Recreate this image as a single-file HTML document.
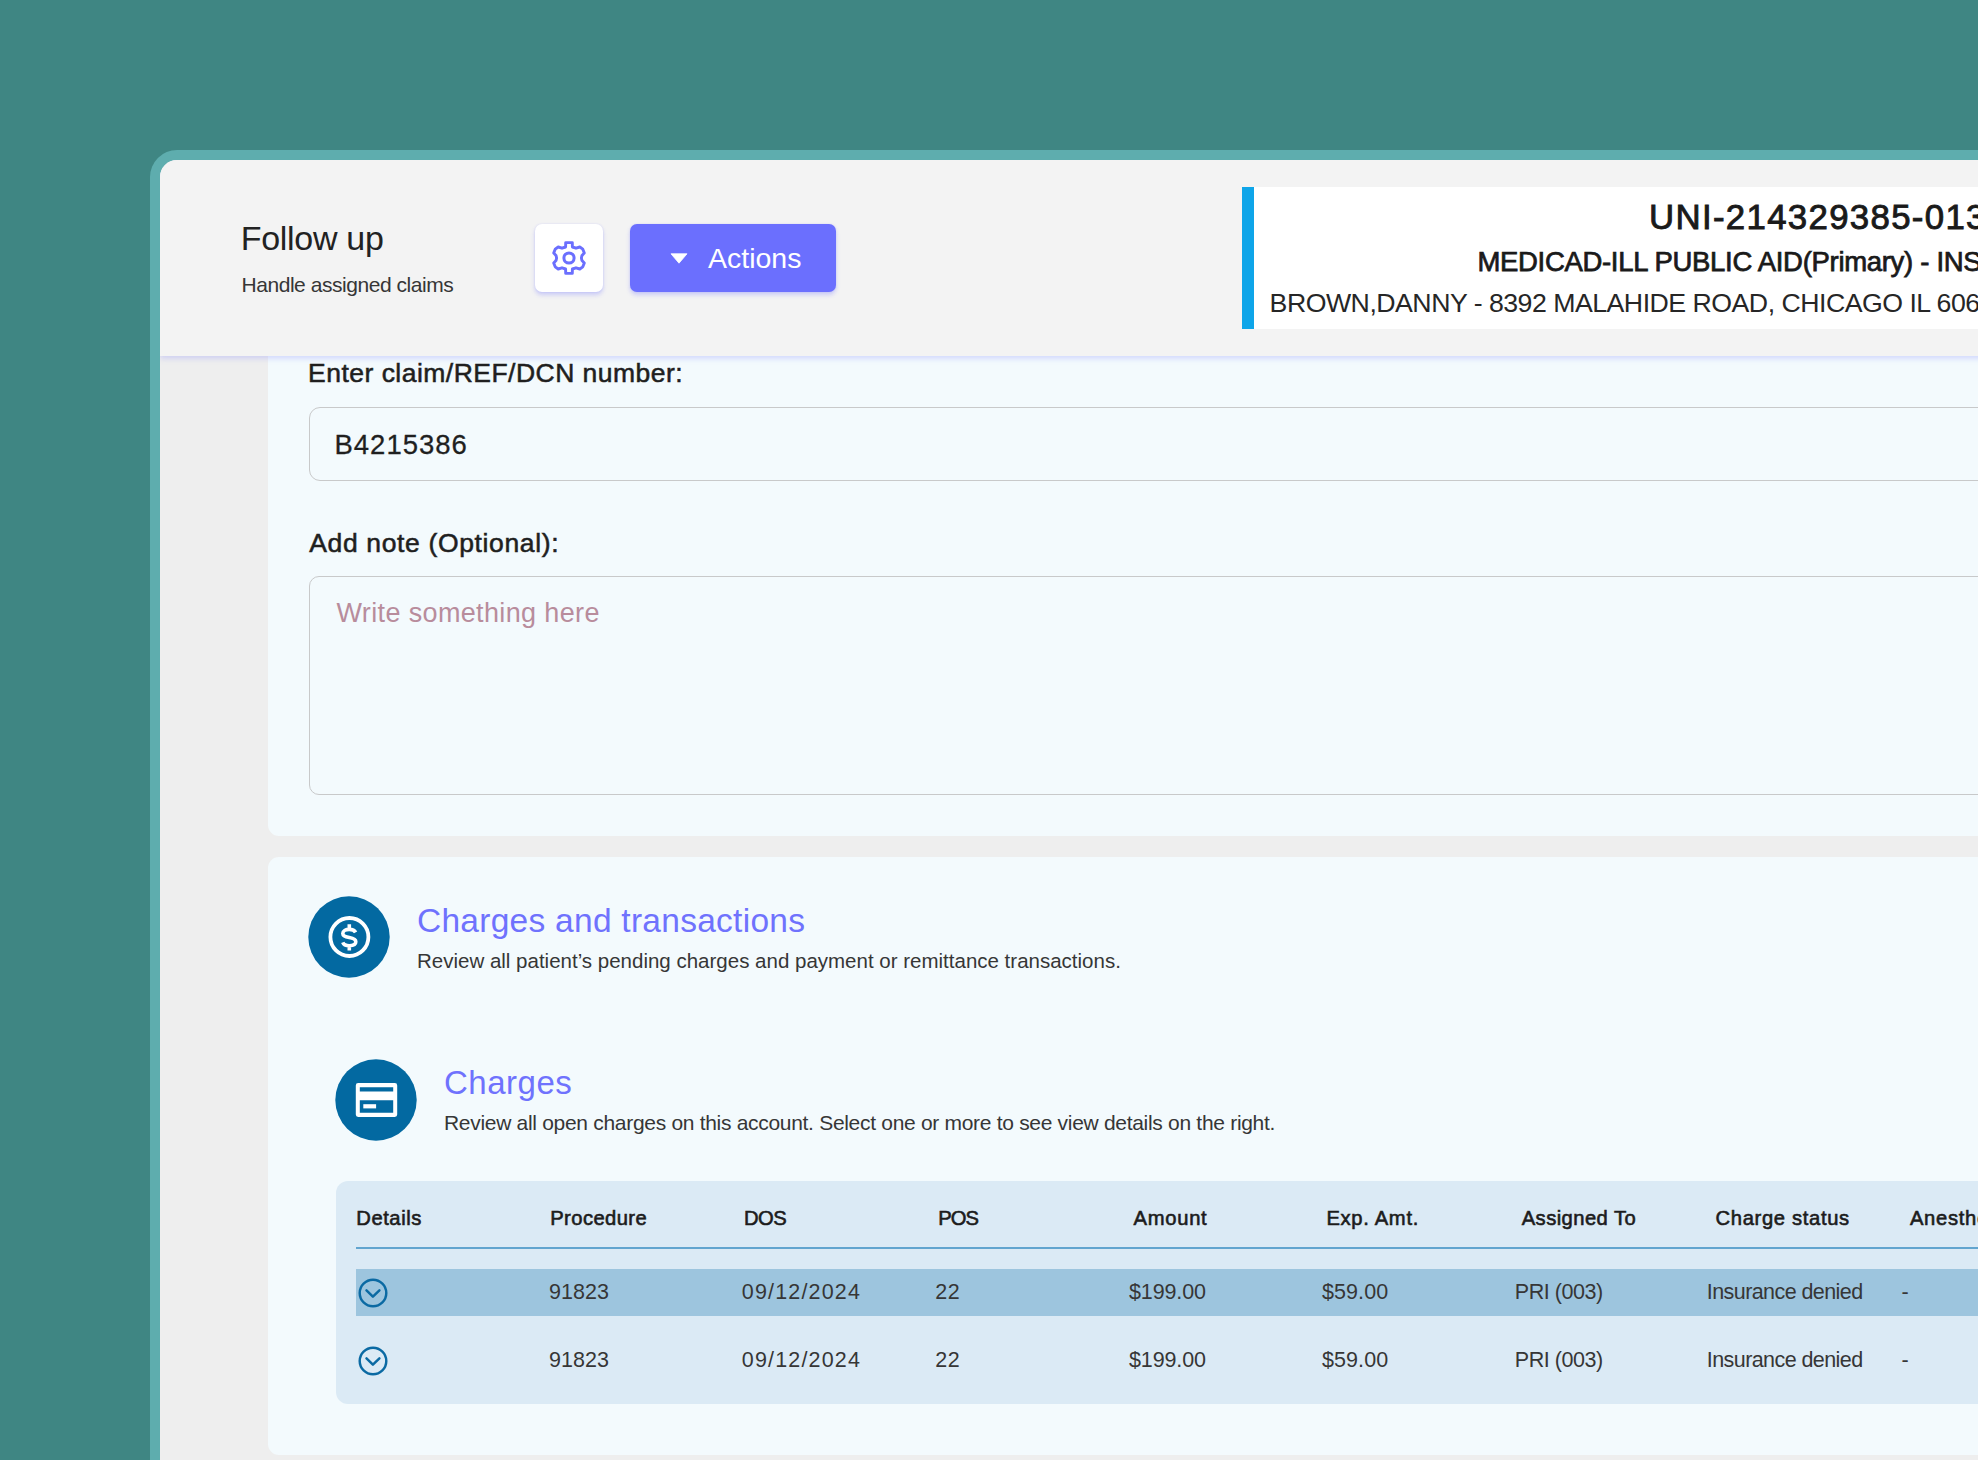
<!DOCTYPE html>
<html><head><meta charset="utf-8"><style>
*{margin:0;padding:0;box-sizing:border-box}
html,body{width:1978px;height:1460px;overflow:hidden;background:#3f8683;font-family:'Liberation Sans', sans-serif}
.t{position:absolute;white-space:nowrap;font-family:'Liberation Sans', sans-serif}
.abs{position:absolute}
</style></head><body>
<div class="abs" style="left:150px;top:150px;width:1900px;height:1400px;background:#5eadae;border-top-left-radius:27px"></div>
<div class="abs" style="left:160px;top:160px;width:1900px;height:1400px;background:#eeeeee;border-top-left-radius:17px;overflow:hidden">
<div class="abs" style="left:108px;top:0px;width:1900px;height:676px;background:#f3fafd;border-radius:11px"></div>
<div class="abs" style="left:148.6px;top:247.3px;width:1900px;height:73.7px;border:1.6px solid #c8c9ca;border-radius:11px;background:#f3fafd"></div>
<div class="abs" style="left:148.6px;top:416px;width:1900px;height:218.6px;border:1.6px solid #c8c9ca;border-radius:10px;background:#f3fafd"></div>
<div class="abs" style="left:108px;top:697px;width:1900px;height:598px;background:#f3fafd;border-radius:11px"></div>
<div class="abs" style="left:176px;top:1021px;width:1900px;height:223px;background:#dbeaf5;border-radius:12px"></div>
<div class="abs" style="left:196px;top:1087px;width:1900px;height:2px;background:#62a5cf"></div>
<div class="abs" style="left:196px;top:1109px;width:1900px;height:47px;background:#9dc5de"></div>
<div class="abs" style="left:0;top:0;width:1900px;height:196px;background:#f3f3f3;box-shadow:0 2px 6px rgba(108,111,254,0.28)"></div>
</div>
<div class="abs" style="left:535px;top:224px;width:68px;height:68px;background:#fff;border-radius:7px;box-shadow:0 3px 4px rgba(108,111,254,0.30), 0 0 2px rgba(108,111,254,0.18)"></div>
<svg class="abs" style="left:549px;top:238px" width="40" height="40" viewBox="-20 -20 40 40"><path d="M-3.30,-15.40 L-3.40,-11.00 L-7.00,-9.80 L-10.80,-11.00 L-13.80,-8.80 L-15.30,-5.00 L-13.00,-2.60 L-12.40,0.00 L-13.00,2.60 L-15.30,5.00 L-13.80,8.80 L-10.80,11.00 L-7.00,9.80 L-3.40,11.00 L-3.30,15.40 L3.30,15.40 L3.40,11.00 L7.00,9.80 L10.80,11.00 L13.80,8.80 L15.30,5.00 L13.00,2.60 L12.40,0.00 L13.00,-2.60 L15.30,-5.00 L13.80,-8.80 L10.80,-11.00 L7.00,-9.80 L3.40,-11.00 L3.30,-15.40 Z" fill="none" stroke="#6b6ffe" stroke-width="2.9" stroke-linejoin="round"/><circle cx="0" cy="0" r="5.1" fill="none" stroke="#6b6ffe" stroke-width="3.0"/></svg>
<div class="abs" style="left:630px;top:224px;width:206px;height:68px;background:#6b6ffe;border-radius:7px;box-shadow:0 3px 4px rgba(108,111,254,0.30), 0 0 2px rgba(108,111,254,0.18)"></div>
<svg class="abs" style="left:660px;top:240px" width="40" height="36" viewBox="660 240 40 36"><path d="M671,253.8 L687,253.8 L679,263.2 Z" fill="#fff" stroke="#fff" stroke-width="0.8" stroke-linejoin="round"/></svg>
<div class="abs" style="left:1242px;top:187px;width:800px;height:142px;background:#ffffff;border-left:12px solid #0ea5e9"></div>
<svg class="abs" style="left:308px;top:896px" width="82" height="82" viewBox="0 0 82 82"><circle cx="41" cy="41" r="40.7" fill="#0369a1"/><circle cx="41.4" cy="41" r="19.0" fill="none" stroke="#fff" stroke-width="3.8"/><path d="M47.6,36.4 C46.6,34.4 44.2,33.4 41.3,33.4 C37.6,33.4 34.8,35 34.8,37.6 C34.8,40.4 37.8,41 41.3,41.6 C44.8,42.2 47.8,43 47.8,45.8 C47.8,48.3 45,49.7 41.3,49.7 C38.2,49.7 35.6,48.7 34.8,46.4 M41.3,28.2 L41.3,33.4 M41.3,49.7 L41.3,54.4" fill="none" stroke="#fff" stroke-width="3.6" stroke-linecap="butt" stroke-linejoin="round"/></svg>
<svg class="abs" style="left:335px;top:1059px" width="82" height="82" viewBox="0 0 82 82"><circle cx="41" cy="41" r="40.7" fill="#0369a1"/><path fill="#fff" fill-rule="evenodd" d="M23.2,24 L59.8,24 Q62.2,24 62.2,26.4 L62.2,55.6 Q62.2,58 59.8,58 L23.2,58 Q20.8,58 20.8,55.6 L20.8,26.4 Q20.8,24 23.2,24 Z M24.8,28.2 L24.8,32.6 L58.2,32.6 L58.2,28.2 Z M24.8,41.2 L24.8,53.8 L58.2,53.8 L58.2,41.2 Z"/><rect x="28.3" y="45.2" width="12.8" height="4.2" fill="#fff"/></svg>
<svg class="abs" style="left:357.1px;top:1276.9px" width="32" height="32" viewBox="-16 -16 32 32"><circle cx="0" cy="0" r="13.3" fill="none" stroke="#0b6aa3" stroke-width="2.45"/><path d="M-6.5,-2.7 L-0.1,3.6 L6.4,-2.7" fill="none" stroke="#0b6aa3" stroke-width="2.5" stroke-linecap="round" stroke-linejoin="round"/></svg>
<svg class="abs" style="left:357.1px;top:1344.8px" width="32" height="32" viewBox="-16 -16 32 32"><circle cx="0" cy="0" r="13.3" fill="none" stroke="#0b6aa3" stroke-width="2.45"/><path d="M-6.5,-2.7 L-0.1,3.6 L6.4,-2.7" fill="none" stroke="#0b6aa3" stroke-width="2.5" stroke-linecap="round" stroke-linejoin="round"/></svg>
<div class="t" style="left:240.70px;top:220.62px;font-size:34px;line-height:34px;font-weight:400;letter-spacing:-0.300px;color:#222222;">Follow up</div>
<div class="t" style="left:241.50px;top:274.12px;font-size:21px;line-height:21px;font-weight:400;letter-spacing:-0.452px;color:#363636;">Handle assigned claims</div>
<div class="t" style="left:708.10px;top:243.92px;font-size:28.5px;line-height:28.5px;font-weight:400;letter-spacing:-0.017px;color:#ffffff;">Actions</div>
<div class="t" style="left:1649.10px;top:199.84px;font-size:34.8px;line-height:34.8px;font-weight:400;letter-spacing:1.313px;color:#1a1a1a;-webkit-text-stroke:0.9px #1a1a1a;">UNI-214329385-013</div>
<div class="t" style="left:1477.40px;top:248.22px;font-size:27.5px;line-height:27.5px;font-weight:400;letter-spacing:-0.311px;color:#1a1a1a;-webkit-text-stroke:0.75px #1a1a1a;">MEDICAD-ILL PUBLIC AID(Primary) - INSURANCE</div>
<div class="t" style="left:1269.60px;top:289.60px;font-size:26.7px;line-height:26.7px;font-weight:400;letter-spacing:-0.502px;color:#262626;">BROWN,DANNY - 8392 MALAHIDE ROAD, CHICAGO IL 60606</div>
<div class="t" style="left:308.10px;top:360.47px;font-size:26.5px;line-height:26.5px;font-weight:400;letter-spacing:0.473px;color:#1f1f1f;-webkit-text-stroke:0.55px #1f1f1f;">Enter claim/REF/DCN number:</div>
<div class="t" style="left:334.50px;top:431.32px;font-size:27.5px;line-height:27.5px;font-weight:400;letter-spacing:0.986px;color:#1f1f1f;-webkit-text-stroke:0.3px #1f1f1f;">B4215386</div>
<div class="t" style="left:309.20px;top:529.87px;font-size:26.5px;line-height:26.5px;font-weight:400;letter-spacing:0.642px;color:#1f1f1f;-webkit-text-stroke:0.55px #1f1f1f;">Add note (Optional):</div>
<div class="t" style="left:336.50px;top:599.84px;font-size:27px;line-height:27px;font-weight:400;letter-spacing:0.358px;color:#b88c9c;">Write something here</div>
<div class="t" style="left:417.00px;top:903.64px;font-size:33.5px;line-height:33.5px;font-weight:400;letter-spacing:0.270px;color:#6f72fd;">Charges and transactions</div>
<div class="t" style="left:417.00px;top:950.65px;font-size:20.5px;line-height:20.5px;font-weight:400;letter-spacing:0.000px;color:#363636;">Review all patient’s pending charges and payment or remittance transactions.</div>
<div class="t" style="left:444.00px;top:1066.37px;font-size:33px;line-height:33px;font-weight:400;letter-spacing:0.500px;color:#6f72fd;">Charges</div>
<div class="t" style="left:444.00px;top:1112.42px;font-size:21px;line-height:21px;font-weight:400;letter-spacing:-0.302px;color:#363636;">Review all open charges on this account. Select one or more to see view details on the right.</div>
<div class="t" style="left:356.30px;top:1207.70px;font-size:20.2px;line-height:20.2px;font-weight:400;letter-spacing:0.550px;color:#1c1c1c;-webkit-text-stroke:0.6px #1c1c1c;">Details</div>
<div class="t" style="left:550.20px;top:1207.70px;font-size:20.2px;line-height:20.2px;font-weight:400;letter-spacing:0.425px;color:#1c1c1c;-webkit-text-stroke:0.6px #1c1c1c;">Procedure</div>
<div class="t" style="left:743.90px;top:1207.70px;font-size:20.2px;line-height:20.2px;font-weight:400;letter-spacing:-0.400px;color:#1c1c1c;-webkit-text-stroke:0.6px #1c1c1c;">DOS</div>
<div class="t" style="left:938.20px;top:1207.70px;font-size:20.2px;line-height:20.2px;font-weight:400;letter-spacing:-0.900px;color:#1c1c1c;-webkit-text-stroke:0.6px #1c1c1c;">POS</div>
<div class="t" style="left:1133.60px;top:1207.70px;font-size:20.2px;line-height:20.2px;font-weight:400;letter-spacing:0.700px;color:#1c1c1c;-webkit-text-stroke:0.6px #1c1c1c;">Amount</div>
<div class="t" style="left:1326.40px;top:1207.70px;font-size:20.2px;line-height:20.2px;font-weight:400;letter-spacing:0.688px;color:#1c1c1c;-webkit-text-stroke:0.6px #1c1c1c;">Exp. Amt.</div>
<div class="t" style="left:1521.70px;top:1207.70px;font-size:20.2px;line-height:20.2px;font-weight:400;letter-spacing:0.440px;color:#1c1c1c;-webkit-text-stroke:0.6px #1c1c1c;">Assigned To</div>
<div class="t" style="left:1715.60px;top:1207.70px;font-size:20.2px;line-height:20.2px;font-weight:400;letter-spacing:0.658px;color:#1c1c1c;-webkit-text-stroke:0.6px #1c1c1c;">Charge status</div>
<div class="t" style="left:1909.90px;top:1207.70px;font-size:20.2px;line-height:20.2px;font-weight:400;letter-spacing:0.720px;color:#1c1c1c;-webkit-text-stroke:0.6px #1c1c1c;">Anesthesia</div>
<div class="t" style="left:549.10px;top:1282.40px;font-size:21.5px;line-height:21.5px;font-weight:400;letter-spacing:0.025px;color:#363636;">91823</div>
<div class="t" style="left:741.80px;top:1282.40px;font-size:21.5px;line-height:21.5px;font-weight:400;letter-spacing:1.167px;color:#363636;">09/12/2024</div>
<div class="t" style="left:935.20px;top:1282.40px;font-size:21.5px;line-height:21.5px;font-weight:400;letter-spacing:0.600px;color:#363636;">22</div>
<div class="t" style="left:1129.00px;top:1282.40px;font-size:21.5px;line-height:21.5px;font-weight:400;letter-spacing:-0.117px;color:#363636;">$199.00</div>
<div class="t" style="left:1322.00px;top:1282.40px;font-size:21.5px;line-height:21.5px;font-weight:400;letter-spacing:0.080px;color:#363636;">$59.00</div>
<div class="t" style="left:1514.80px;top:1282.40px;font-size:21.5px;line-height:21.5px;font-weight:400;letter-spacing:-0.463px;color:#363636;">PRI (003)</div>
<div class="t" style="left:1706.80px;top:1282.40px;font-size:21.5px;line-height:21.5px;font-weight:400;letter-spacing:-0.573px;color:#363636;">Insurance denied</div>
<div class="t" style="left:1901.60px;top:1282.40px;font-size:21.5px;line-height:21.5px;font-weight:400;letter-spacing:0.000px;color:#363636;">-</div>
<div class="t" style="left:549.10px;top:1349.70px;font-size:21.5px;line-height:21.5px;font-weight:400;letter-spacing:0.025px;color:#363636;">91823</div>
<div class="t" style="left:741.80px;top:1349.70px;font-size:21.5px;line-height:21.5px;font-weight:400;letter-spacing:1.167px;color:#363636;">09/12/2024</div>
<div class="t" style="left:935.20px;top:1349.70px;font-size:21.5px;line-height:21.5px;font-weight:400;letter-spacing:0.600px;color:#363636;">22</div>
<div class="t" style="left:1129.00px;top:1349.70px;font-size:21.5px;line-height:21.5px;font-weight:400;letter-spacing:-0.117px;color:#363636;">$199.00</div>
<div class="t" style="left:1322.00px;top:1349.70px;font-size:21.5px;line-height:21.5px;font-weight:400;letter-spacing:0.080px;color:#363636;">$59.00</div>
<div class="t" style="left:1514.80px;top:1349.70px;font-size:21.5px;line-height:21.5px;font-weight:400;letter-spacing:-0.463px;color:#363636;">PRI (003)</div>
<div class="t" style="left:1706.80px;top:1349.70px;font-size:21.5px;line-height:21.5px;font-weight:400;letter-spacing:-0.573px;color:#363636;">Insurance denied</div>
<div class="t" style="left:1901.60px;top:1349.70px;font-size:21.5px;line-height:21.5px;font-weight:400;letter-spacing:0.000px;color:#363636;">-</div>
</body></html>
